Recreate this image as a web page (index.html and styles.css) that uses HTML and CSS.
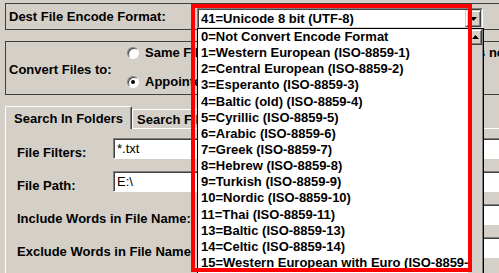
FILE: index.html
```html
<!DOCTYPE html>
<html lang="en">
<head>
    <meta charset="UTF-8">
    <title>Encode Converter Options</title>
    <link rel="stylesheet" href="styles.css">
</head>
<body>
<div class="window">

    <div class="group group-format">
        <span class="format-label">Dest File Encode Format:</span>
        <div class="combo">
            <div class="combo-inner">
                <span class="combo-value">41=Unicode 8 bit (UTF-8)</span>
                <span class="btn combo-btn">
                    <svg width="7" height="4" viewBox="0 0 7 4"><polygon points="0,0 7,0 3.5,4" fill="#000"/></svg>
                </span>
            </div>
        </div>
    </div>

    <div class="group group-convert">
        <span class="convert-label">Convert Files to:</span>
        <div class="radios">
            <label class="radio"><span class="dot"></span>Same Files Path as Source, and Overwrite Source Files no Backup</label>
            <label class="radio checked"><span class="dot"></span>Appointed Folder</label>
        </div>
    </div>

    <div class="tabs">
        <div class="tab active">Search In Folders</div>
        <div class="tab">Search Files</div>
    </div>
    <div class="tab-panel">
        <div class="field-row">
            <span class="field-label">File Filters:</span>
            <div class="edit edit-short">*.txt</div>
        </div>
        <div class="field-row">
            <span class="field-label">File Path:</span>
            <div class="edit edit-short">E:\</div>
        </div>
        <div class="field-row">
            <span class="field-label">Include Words in File Name:</span>
            <div class="edit edit-long"></div>
        </div>
        <div class="field-row">
            <span class="field-label">Exclude Words in File Name:</span>
            <div class="edit edit-long"></div>
        </div>
    </div>

    <!-- opened drop-down of the combo -->
    <div class="droplist">
        <ul class="items">
            <li>0=Not Convert Encode Format</li>
            <li>1=Western European (ISO-8859-1)</li>
            <li>2=Central European (ISO-8859-2)</li>
            <li>3=Esperanto (ISO-8859-3)</li>
            <li>4=Baltic (old) (ISO-8859-4)</li>
            <li>5=Cyrillic (ISO-8859-5)</li>
            <li>6=Arabic (ISO-8859-6)</li>
            <li>7=Greek (ISO-8859-7)</li>
            <li>8=Hebrew (ISO-8859-8)</li>
            <li>9=Turkish (ISO-8859-9)</li>
            <li>10=Nordic (ISO-8859-10)</li>
            <li>11=Thai (ISO-8859-11)</li>
            <li>13=Baltic (ISO-8859-13)</li>
            <li>14=Celtic (ISO-8859-14)</li>
            <li>15=Western European with Euro (ISO-8859-15)</li>
            <li>16=South-Eastern European (ISO-8859-16)</li>
        </ul>
        <div class="scrollbar">
            <span class="btn scroll-btn">
                <svg width="7" height="4" viewBox="0 0 7 4"><polygon points="0,4 7,4 3.5,0" fill="#000"/></svg>
            </span>
        </div>
    </div>

    <!-- red annotation frame -->
    <div class="highlight"></div>
</div>
</body>
</html>
```

FILE: styles.css
```css
body { margin: 0; background: #d4d0c8; font: bold 13px "Liberation Sans", Arial, sans-serif; color: #000; overflow: hidden; }
.window { position: relative; width: 499px; height: 273px; overflow: hidden; padding: 3px 0 0 5px; box-sizing: border-box; }

/* group boxes */
.group { display: flex; align-items: flex-start; border: 1px solid #404040; margin-right: -40px; box-sizing: border-box; }
.group-format { height: 27px; }
.format-label { flex: none; width: 188px; padding: 5px 0 0 3px; line-height: 15px; white-space: nowrap; }

.combo { flex: none; margin-top: 4px; width: 286px; height: 21px; box-sizing: border-box; border: 1px solid; border-color: #808080 #fff #fff #808080; background: #fff; }
.combo-inner { display: flex; height: 100%; box-sizing: border-box; border: 1px solid; border-color: #404040 #d4d0c8 #d4d0c8 #404040; }
.combo-value { flex: 1; padding: 1px 0 0 2px; line-height: 15px; white-space: nowrap; }

.btn { display: flex; align-items: center; justify-content: center; box-sizing: border-box; background: #d4d0c8; border: 1px solid; border-color: #d4d0c8 #404040 #404040 #d4d0c8; box-shadow: inset 1px 1px #fff, inset -1px -1px #808080; }
.combo-btn { flex: none; width: 16px; }

.group-convert { margin-top: 11px; height: 54px; }
.convert-label { flex: none; width: 118px; padding: 20px 0 0 3px; line-height: 15px; white-space: nowrap; }
.radios { flex: none; display: flex; flex-direction: column; gap: 14px; padding-top: 3px; }
.radio { display: flex; align-items: center; gap: 6px; line-height: 15px; white-space: nowrap; }
.dot { flex: none; width: 12px; height: 12px; box-sizing: border-box; border-radius: 50%; background: #fff; border: 1px solid; border-color: #808080 #fff #fff #808080; box-shadow: inset 1px 1px #404040; display: flex; align-items: center; justify-content: center; }
.radio.checked .dot::after { content: ""; width: 4px; height: 4px; border-radius: 50%; background: #000; }

/* tabs */
.tabs { display: flex; align-items: flex-end; margin-top: 11px; height: 22px; }
.tab { flex: none; box-sizing: border-box; padding: 2px 0 0 8px; line-height: 15px; white-space: nowrap; background: #d4d0c8; border: 1px solid; border-bottom: none; border-color: #fff #404040 #fff #fff; box-shadow: inset -1px 0 #808080; border-radius: 2px 2px 0 0; }
.tab.active { position: relative; width: 127px; height: 23px; margin-bottom: -1px; padding-top: 4px; }
.tab:not(.active) { width: 200px; height: 19px; padding-left: 4px; }
.tab-panel { border-top: 1px solid #fff; border-left: 1px solid #fff; margin-right: -40px; padding-top: 9px; height: 200px; }

.field-row { display: flex; align-items: flex-start; height: 33px; }
.field-label { flex: none; width: 96px; padding: 7px 0 0 11px; line-height: 15px; white-space: nowrap; }
.edit { flex: none; height: 21px; box-sizing: border-box; border: 1px solid; border-color: #808080 #fff #fff #808080; box-shadow: inset 1px 1px #404040; background: #fff; padding: 2px 0 0 3px; line-height: 15px; font-weight: normal; }
.edit-short { width: 420px; }
.edit-long { width: 300px; margin-left: 100px; }

/* open drop-down list */
.droplist { position: absolute; z-index: 2; left: 197px; top: 28px; width: 287px; height: 260px; box-sizing: border-box; border: 1px solid #000; background: #fff; display: flex; }
.items { flex: 1; margin: 0; padding: 0; list-style: none; overflow: hidden; }
.items li { height: 16.15px; line-height: 16px; padding-left: 3px; white-space: nowrap; overflow: hidden; }
.scrollbar { flex: none; width: 14px; background: #d4d0c8; border-right: 1px solid #808080; }
.scroll-btn { height: 16px; }

.highlight { position: absolute; z-index: 3; left: 191px; top: 4px; width: 281px; height: 268px; box-sizing: border-box; border: 4px solid #f00; }
```
